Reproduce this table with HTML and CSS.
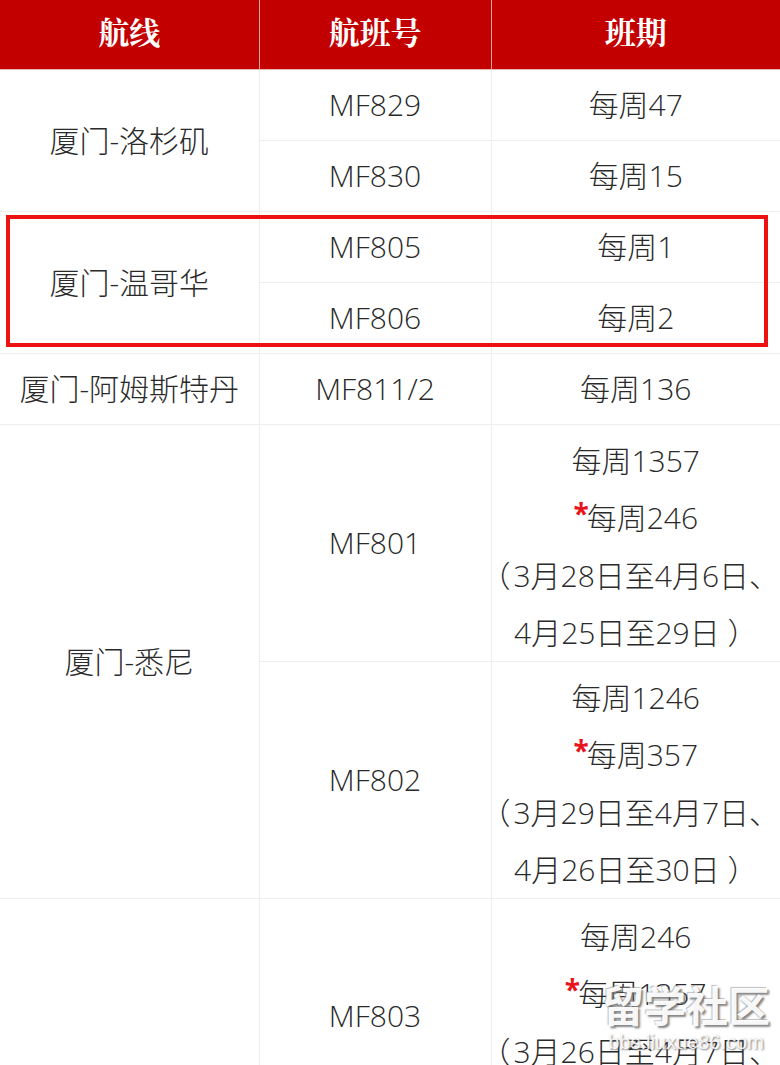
FILE: index.html
```html
<!DOCTYPE html>
<html lang="zh-CN">
<head>
<meta charset="utf-8">
<title>航线班期</title>
<link rel="stylesheet" href="styles.css">
</head>
<body>
<div class="page">
  <table class="schedule">
    <colgroup>
      <col class="c-route">
      <col class="c-flight">
      <col class="c-days">
    </colgroup>
    <thead>
      <tr class="head">
        <th>航线</th>
        <th>航班号</th>
        <th>班期</th>
      </tr>
    </thead>
    <tbody>
      <tr class="single">
        <td rowspan="2">厦门-洛杉矶</td>
        <td>MF829</td>
        <td>每周47</td>
      </tr>
      <tr class="single">
        <td>MF830</td>
        <td>每周15</td>
      </tr>
      <tr class="single">
        <td rowspan="2">厦门-温哥华</td>
        <td>MF805</td>
        <td>每周1</td>
      </tr>
      <tr class="single">
        <td>MF806</td>
        <td>每周2</td>
      </tr>
      <tr class="single">
        <td>厦门-阿姆斯特丹</td>
        <td>MF811/2</td>
        <td>每周136</td>
      </tr>
      <tr class="multi">
        <td rowspan="2">厦门-悉尼</td>
        <td>MF801</td>
        <td class="days">
          <span class="ln">每周1357</span>
          <span class="ln"><span class="star">*</span>每周246</span>
          <span class="ln"><span class="open">（</span>3月28日至4月6日、</span>
          <span class="ln">4月25日至29日 ）</span>
        </td>
      </tr>
      <tr class="multi">
        <td>MF802</td>
        <td class="days">
          <span class="ln">每周1246</span>
          <span class="ln"><span class="star">*</span>每周357</span>
          <span class="ln"><span class="open">（</span>3月29日至4月7日、</span>
          <span class="ln">4月26日至30日 ）</span>
        </td>
      </tr>
      <tr class="multi">
        <td></td>
        <td>MF803</td>
        <td class="days top">
          <span class="ln">每周246</span>
          <span class="ln"><span class="star">*</span>每周1357</span>
          <span class="ln"><span class="open">（</span>3月26日至4月7日、</span>
        </td>
      </tr>
    </tbody>
  </table>

  <div class="highlight"></div>

  <div class="watermark">
    <span class="wm-main">留学社区</span>
    <span class="wm-url">bbs.liuxue86.com</span>
  </div>
</div>
</body>
</html>
```

FILE: styles.css
```css
html, body {
  margin: 0;
  padding: 0;
  background: #ffffff;
}

.page {
  position: relative;
  width: 780px;
  height: 1065px;
  overflow: hidden;
}

.schedule {
  width: 780px;
  table-layout: fixed;
  border-collapse: collapse;
  font-family: "Open Sans", "Noto Sans CJK SC", sans-serif;
  font-weight: 300;
  font-size: 30px;
  color: #2a2a2a;
}

.c-route { width: 259px; }
.c-flight { width: 232px; }
.c-days { width: 289px; }

.head th {
  height: 61px;
  padding: 0 0 8px 0;
  background: #c30000;
  color: #ffffff;
  font-family: "Noto Serif CJK SC", "Noto Sans CJK SC", serif;
  font-weight: 700;
  font-size: 31px;
  line-height: 40px;
  text-align: center;
  vertical-align: middle;
  border-left: 1px solid #e9a3a3;
  border-bottom: 1px solid #e6b5b0;
}

.head th:first-child {
  border-left: none;
}

.schedule td {
  padding: 0;
  text-align: center;
  vertical-align: middle;
  border: 1px solid #eeeeee;
  line-height: 58px;
}

.schedule td:first-child {
  border-left: none;
}

.schedule td:last-child {
  border-right: none;
}

.single td {
  height: 70px;
}

.multi td {
  height: 233px;
}

.schedule td.days {
  line-height: 57px;
  padding-top: 7px;
  height: 225px;
}

.schedule td.top {
  vertical-align: top;
  padding-top: 9px;
  height: 224px;
}

.ln {
  display: block;
  white-space: nowrap;
}

.open {
  margin-left: -12px;
  margin-right: 3px;
}

.star {
  color: #e8141c;
  font-weight: 700;
  font-size: 28px;
  position: relative;
  top: -5px;
  margin-right: -2px;
}

.highlight {
  position: absolute;
  left: 6px;
  top: 215px;
  width: 762px;
  height: 132px;
  box-sizing: border-box;
  border: 4px solid #ee1111;
}

.watermark {
  position: absolute;
  left: 598px;
  top: 977px;
  width: 176px;
  display: flex;
  flex-direction: column;
  align-items: center;
  font-family: "Noto Sans CJK SC", sans-serif;
  white-space: nowrap;
}

.wm-main {
  font-size: 42px;
  font-weight: 700;
  line-height: 54px;
  color: rgba(255, 255, 255, 0.95);
  text-shadow: 2px 2px 2px rgba(110, 110, 110, 0.85), -1px -1px 1px rgba(150, 150, 150, 0.6);
}

.wm-url {
  font-family: "Liberation Sans", sans-serif;
  font-size: 20px;
  line-height: 22px;
  color: rgba(255, 255, 255, 0.9);
  text-shadow: 1px 1px 2px rgba(100, 100, 100, 0.85);
}
```
